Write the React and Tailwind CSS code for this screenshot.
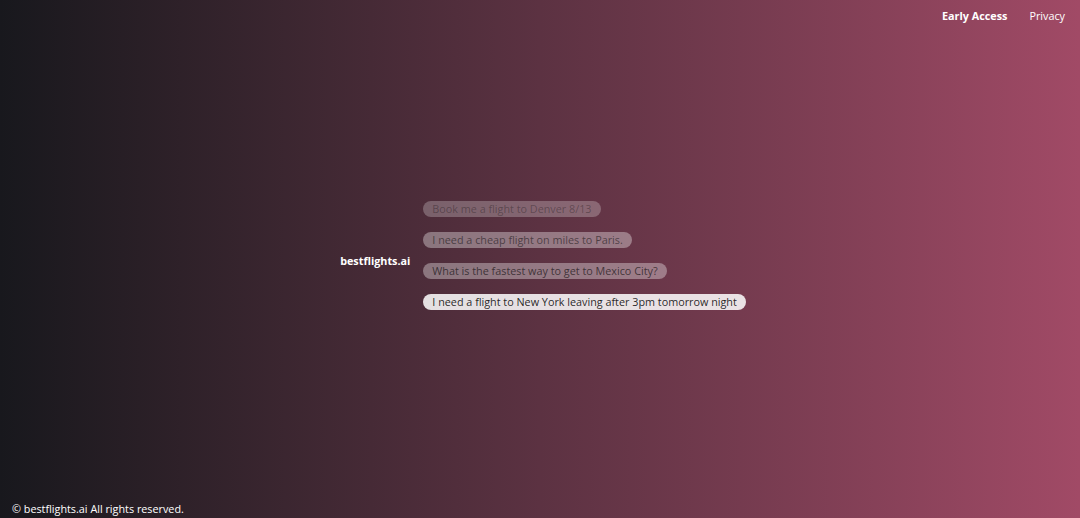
import React from 'react';

const PROMPTS = [
  { text: 'Book me a flight to Denver 8/13', cls: 'bg-white/25 text-black/30' },
  { text: 'I need a cheap flight on miles to Paris.', cls: 'bg-white/35 text-black/50' },
  { text: 'What is the fastest way to get to Mexico City?', cls: 'bg-white/35 text-black/60' },
  { text: 'I need a flight to New York leaving after 3pm tomorrow night', cls: 'bg-white/85 text-black/85' },
];

export default function App() {
  return (
    <div
      className="relative flex h-[518px] w-full flex-col overflow-hidden bg-gradient-to-r from-[#18181d] via-[#5c3242] to-[#a14a66] text-white"
      style={{ fontFamily: '"Open Sans", "Noto Sans", sans-serif' }}
    >
      <nav className="flex justify-end gap-[22px] px-[15px] pt-[8px] text-[10.8px]">
        <a className="font-bold">Early Access</a>
        <a>Privacy</a>
      </nav>

      <main className="flex flex-1 items-center justify-center pb-[14px]">
        <div className="ml-[6px] flex items-center gap-[13px]">
          <div className="mt-[11px] text-[10.8px] font-bold">bestflights.ai</div>
          <div className="flex flex-col items-start gap-[15px]">
            {PROMPTS.map((p) => (
              <div
                key={p.text}
                className={`rounded-full px-[9px] text-[10.8px] leading-[16px] ${p.cls}`}
              >
                {p.text}
              </div>
            ))}
          </div>
        </div>
      </main>

      <footer className="px-[12px] pb-[1px] text-[10.8px]">© bestflights.ai All rights reserved.</footer>
    </div>
  );
}
